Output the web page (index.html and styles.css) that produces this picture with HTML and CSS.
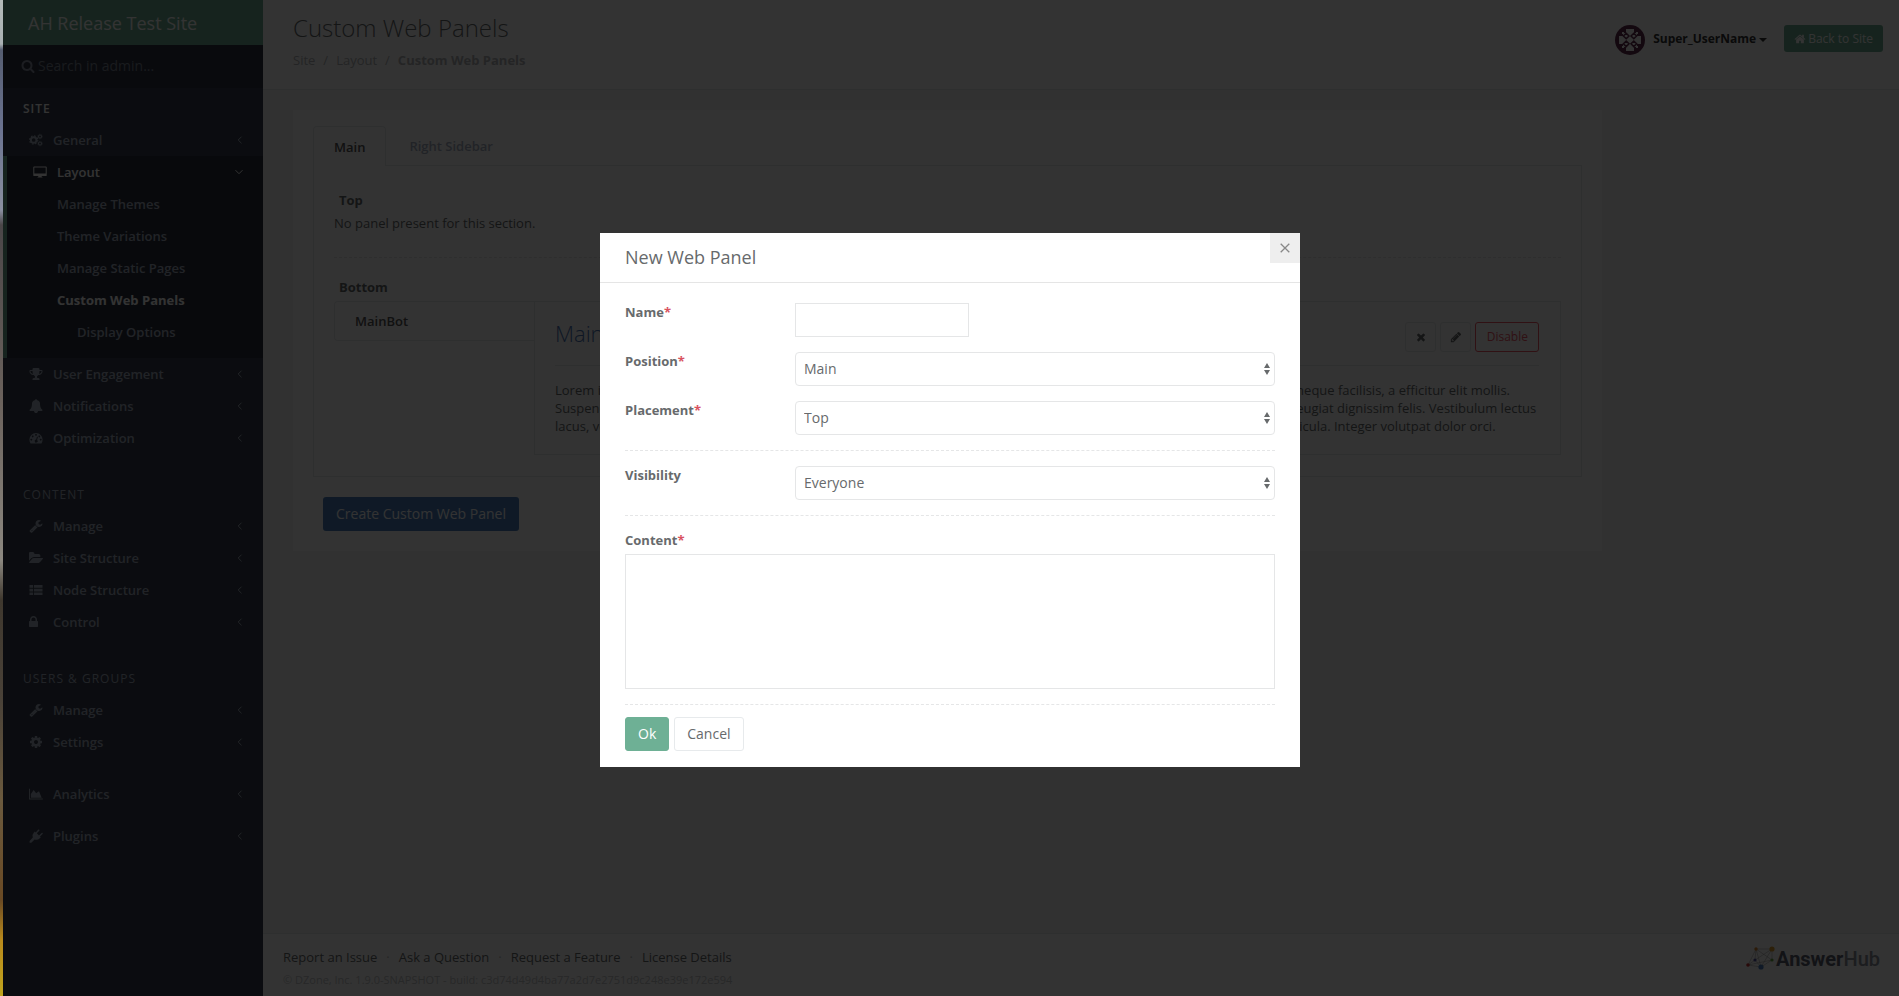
FILE: index.html
```html
<!DOCTYPE html>
<html lang="en">
<head>
<meta charset="utf-8">
<title>Custom Web Panels</title>
<link rel="stylesheet" href="styles.css">
</head>
<body>
<svg class="sprite" aria-hidden="true">
  <symbol id="i-search" viewBox="0 0 1792 1792"><path d="M1216 832q0-185-131.500-316.500t-316.500-131.500-316.500 131.500-131.500 316.500 131.500 316.500 316.500 131.500 316.500-131.500 131.500-316.500zm512 832q0 52-38 90t-90 38q-54 0-90-38l-343-342q-179 124-399 124-143 0-273.500-55.500t-225-150-150-225-55.500-273.500 55.500-273.500 150-225 225-150 273.500-55.500 273.500 55.500 225 150 150 225 55.500 273.500q0 220-124 399l343 343q37 37 37 90z"/></symbol>
  <symbol id="i-home" viewBox="0 0 1792 1792"><path d="M1472 992v480q0 26-19 45t-45 19h-384v-384h-256v384h-384q-26 0-45-19t-19-45v-480q0-1 .5-3t.5-3l575-474 575 474q1 2 1 6zm223-69l-62 74q-8 9-21 11h-3q-13 0-21-7l-692-577-692 577q-12 8-24 7-13-2-21-11l-62-74q-8-10-7-23.500t11-21.500l719-599q32-26 76-26t76 26l244 204v-195q0-14 9-23t23-9h192q14 0 23 9t9 23v408l219 182q10 8 11 21.500t-7 23.500z"/></symbol>
  <symbol id="i-cog" viewBox="0 0 1792 1792"><path d="M1152 896q0-106-75-181t-181-75-181 75-75 181 75 181 181 75 181-75 75-181zm512-109v222q0 12-8 23t-20 13l-185 28q-19 54-39 91 35 50 107 138 10 12 10 25t-9 23q-27 37-99 108t-94 71q-12 0-26-9l-138-108q-44 23-91 38-16 136-29 186-7 28-36 28h-222q-14 0-24.500-8.500t-11.500-21.500l-28-184q-49-16-90-37l-141 107q-10 9-25 9-14 0-25-11-126-114-165-168-7-10-7-23 0-12 8-23 15-21 51-66.500t54-70.500q-27-50-41-99l-183-27q-13-2-21-12.500t-8-23.500v-222q0-12 8-23t19-13l186-28q14-46 39-92-40-57-107-138-10-12-10-24 0-10 9-23 26-36 98.500-107.500t94.500-71.500q13 0 26 10l138 107q44-23 91-38 16-136 29-186 7-28 36-28h222q14 0 24.500 8.500t11.500 21.500l28 184q49 16 90 37l142-107q9-9 24-9 13 0 25 10 129 119 165 170 7 8 7 22 0 12-8 23-15 21-51 66.500t-54 70.500q26 50 41 98l183 28q13 2 21 12.500t8 23.500z"/></symbol>
  <symbol id="i-cogs" viewBox="0 0 15 14"><g fill="none" stroke="currentColor"><circle cx="5" cy="7" r="3" stroke-width="2"/><circle cx="5" cy="7" r="4.400" stroke-width="1.200" stroke-dasharray="1.750 1.700"/><circle cx="11.800" cy="3.200" r="1.600" stroke-width="1.200"/><circle cx="11.800" cy="3.200" r="2.400" stroke-width=".8" stroke-dasharray="1 .9"/><circle cx="11.800" cy="10.800" r="1.600" stroke-width="1.200"/><circle cx="11.800" cy="10.800" r="2.400" stroke-width=".8" stroke-dasharray="1 .9"/></g></symbol>
  <symbol id="i-desktop" viewBox="0 0 15 14"><path fill-rule="evenodd" d="M1.200 1h12.600q.9 0 .9.900v8.600q0 .9-.9.900H9.300v.8q1 .2 1 .8H4.700q0-.6 1-.8v-.8H1.200q-.9 0-.9-.9V1.900q0-.9.900-.9zm.2 1.100v6.500h12.200V2.100z"/></symbol>
  <symbol id="i-trophy" viewBox="0 0 1792 1792"><path d="M522 883q-74-162-74-371h-256v96q0 78 94.500 162t235.500 113zm1078-275v-96h-256q0 209-74 371 141-29 235.500-113t94.500-162zm128-128v128q0 71-41.500 143t-112 130-173 97.500-215.500 44.500q-42 54-95 95-38 34-52.500 72.500t-14.500 89.500q0 54 30.500 91t97.500 37q75 0 133.500 45.500t58.500 114.500v64q0 14-9 23t-23 9h-832q-14 0-23-9t-9-23v-64q0-69 58.500-114.500t133.500-45.500q67 0 97.500-37t30.500-91q0-51-14.500-89.500t-52.500-72.500q-53-41-95-95-113-5-215.500-44.500t-173-97.500-112-130-41.500-143v-128q0-40 28-68t68-28h288v-96q0-66 47-113t113-47h576q66 0 113 47t47 113v96h288q40 0 68 28t28 68z"/></symbol>
  <symbol id="i-bell" viewBox="0 0 1792 1792"><path d="M1728 1408q0 52-38 90t-90 38h-448q0 106-75 181t-181 75-181-75-75-181h-448q-52 0-90-38t-38-90q50-42 91-88t85-119.500 74.500-158.500 50-206 19.500-260q0-152 117-282.500t307-158.500q-8-19-8-39 0-40 28-68t68-28 68 28 28 68q0 20-8 39 190 28 307 158.500t117 282.500q0 139 19.500 260t50 206 74.500 158.500 85 119.500 91 88z"/></symbol>
  <symbol id="i-gauge" viewBox="0 0 14 14"><path fill-rule="evenodd" d="M7 2a6.600 6.600 0 0 1 6.600 6.600q0 2-1 3.600-.2.300-.6.300H2q-.4 0-.6-.3-1-1.600-1-3.600A6.600 6.600 0 0 1 7 2zM2.300 7.700a.9.900 0 1 0 .01 0zM3.700 4.400a.9.900 0 1 0 .01 0zM7 3a.9.900 0 1 0 .01 0zM10.300 4.400a.9.900 0 1 0 .01 0zM11.700 7.700a.9.900 0 1 0 .01 0zM8 5.600l-.8 3a1.500 1.500 0 1 0 .9.300l.8-3z"/></symbol>
  <symbol id="i-wrench" viewBox="0 0 1792 1792"><path d="M448 1472q0-26-19-45t-45-19-45 19-19 45 19 45 45 19 45-19 19-45zm644-420l-682 682q-37 37-90 37-52 0-91-37l-106-108q-38-36-38-90 0-53 38-91l681-681q39 98 114.500 173.500t173.500 114.500zm634-435q0 39-23 106-47 134-164.500 217.500t-258.500 83.500q-185 0-316.500-131.500t-131.500-316.500 131.500-316.500 316.500-131.500q58 0 121.500 16.500t107.500 46.500q16 11 16 28t-16 28l-293 169v224l193 107q5-3 79-48.500t135.500-81 70.500-35.500q15 0 23.500 10t8.500 25z"/></symbol>
  <symbol id="i-folder" viewBox="0 0 1820 1792"><path d="M1815 952q0 31-31 66l-336 396q-43 51-120.500 86.500t-143.500 35.500h-1088q-34 0-60.500-13t-26.500-43q0-31 31-66l336-396q43-51 120.500-86.500t143.500-35.500h1088q34 0 60.500 13t26.500 43zm-343-344v160h-832q-94 0-197 47.500t-164 119.500l-337 396-5 6q0-4-.5-12.500t-.5-12.500v-960q0-92 66-158t158-66h320q92 0 158 66t66 158v32h544q92 0 158 66t66 158z"/></symbol>
  <symbol id="i-list" viewBox="0 0 14 14"><path d="M.5 2h3.600v2.700H.5zM5 2h8.500v2.700H5zM.5 5.700h3.600v2.700H.5zM5 5.700h8.500v2.700H5zM.5 9.400h3.600v2.700H.5zM5 9.400h8.500v2.700H5z"/></symbol>
  <symbol id="i-lock" viewBox="320 0 1792 1792"><path d="M640 768h512v-192q0-106-75-181t-181-75-181 75-75 181v192zm832 96v576q0 40-28 68t-68 28h-960q-40 0-68-28t-28-68v-576q0-40 28-68t68-28h32v-192q0-184 132-316t316-132 316 132 132 316v192h32q40 0 68 28t28 68z"/></symbol>
  <symbol id="i-chart" viewBox="0 0 15 14"><path d="M0 1.500h1v10.300h13.800v1H0zM2 11V7l3-4.300 2.700 3.500 3-2.200L13.600 11z"/></symbol>
  <symbol id="i-plug" viewBox="0 0 14 14"><path d="M9.300.6q.6-.3 1 .1t0 1L7.800 4.300l2.200 2.200 2.600-2.600q.6-.4 1 0t0 1L11 7.500l.8.800-1 1q-2.400 2.300-5.200 1.100L2.300 13.700H.6V12l3.200-3.400q-1.100-2.700 1.100-5l1-1 .8.800z"/></symbol>
  <symbol id="i-times" viewBox="0 0 1792 1792"><path d="M1490 1322q0 40-28 68l-136 136q-28 28-68 28t-68-28l-294-294-294 294q-28 28-68 28t-68-28l-136-136q-28-28-28-68t28-68l294-294-294-294q-28-28-28-68t28-68l136-136q28-28 68-28t68 28l294 294 294-294q28-28 68-28t68 28l136 136q28 28 28 68t-28 68l-294 294 294 294q28 28 28 68z"/></symbol>
  <symbol id="i-pencil" viewBox="0 0 1792 1792"><path d="M491 1536l91-91-235-235-91 91v107h128v128h107zm523-928q0-22-22-22-10 0-17 7l-542 542q-7 7-7 17 0 22 22 22 10 0 17-7l542-542q7-7 7-17zm-54-192l416 416-832 832h-416v-416zm683 96q0 53-37 90l-166 166-416-416 166-165q36-38 90-38 53 0 91 38l235 234q37 39 37 91z"/></symbol>
  <symbol id="i-left" viewBox="0 0 8 8"><path d="M5.500.7L2.200 4l3.300 3.300" fill="none" stroke="currentColor"/></symbol>
  <symbol id="i-down" viewBox="0 0 8 8"><path d="M.5 2.200L4 5.700l3.500-3.500" fill="none" stroke="currentColor"/></symbol>
  <symbol id="i-updown" viewBox="0 0 6 12"><path d="M3 0l3 5H0zM3 12L0 7h6z"/></symbol>
</svg>

<div class="app">
  <aside class="sidebar">
    <a class="brand" href="#">AH Release Test Site</a>
    <div class="search">
      <svg class="icon"><use href="#i-search"/></svg>
      <input type="text" placeholder="Search in admin..." aria-label="Search in admin">
    </div>
    <nav class="menu">
      <h2 class="menu-title menu-title-on">SITE</h2>
      <a class="item" href="#"><svg class="icon"><use href="#i-cogs"/></svg><span>General</span><svg class="arrow"><use href="#i-left"/></svg></a>
      <div class="open">
        <a class="item item-on" href="#"><svg class="icon"><use href="#i-desktop"/></svg><span>Layout</span><svg class="arrow"><use href="#i-down"/></svg></a>
        <a class="sub" href="#">Manage Themes</a>
        <a class="sub" href="#">Theme Variations</a>
        <a class="sub" href="#">Manage Static Pages</a>
        <a class="sub sub-on" href="#">Custom Web Panels</a>
        <a class="sub sub-deep" href="#">Display Options</a>
      </div>
      <a class="item" href="#"><svg class="icon"><use href="#i-trophy"/></svg><span>User Engagement</span><svg class="arrow"><use href="#i-left"/></svg></a>
      <a class="item" href="#"><svg class="icon"><use href="#i-bell"/></svg><span>Notifications</span><svg class="arrow"><use href="#i-left"/></svg></a>
      <a class="item" href="#"><svg class="icon"><use href="#i-gauge"/></svg><span>Optimization</span><svg class="arrow"><use href="#i-left"/></svg></a>
      <h2 class="menu-title">CONTENT</h2>
      <a class="item" href="#"><svg class="icon"><use href="#i-wrench"/></svg><span>Manage</span><svg class="arrow"><use href="#i-left"/></svg></a>
      <a class="item" href="#"><svg class="icon"><use href="#i-folder"/></svg><span>Site Structure</span><svg class="arrow"><use href="#i-left"/></svg></a>
      <a class="item" href="#"><svg class="icon"><use href="#i-list"/></svg><span>Node Structure</span><svg class="arrow"><use href="#i-left"/></svg></a>
      <a class="item" href="#"><svg class="icon"><use href="#i-lock"/></svg><span>Control</span><svg class="arrow"><use href="#i-left"/></svg></a>
      <h2 class="menu-title">USERS &amp; GROUPS</h2>
      <a class="item" href="#"><svg class="icon"><use href="#i-wrench"/></svg><span>Manage</span><svg class="arrow"><use href="#i-left"/></svg></a>
      <a class="item" href="#"><svg class="icon"><use href="#i-cog"/></svg><span>Settings</span><svg class="arrow"><use href="#i-left"/></svg></a>
      <a class="item item-first" href="#"><svg class="icon"><use href="#i-chart"/></svg><span>Analytics</span><svg class="arrow"><use href="#i-left"/></svg></a>
      <a class="item item-apart" href="#"><svg class="icon"><use href="#i-plug"/></svg><span>Plugins</span><svg class="arrow"><use href="#i-left"/></svg></a>
    </nav>
  </aside>

  <div class="page">
    <header class="top">
      <div class="heading">
        <h1>Custom Web Panels</h1>
        <nav class="crumbs"><a href="#">Site</a><span>/</span><a href="#">Layout</a><span>/</span><strong>Custom Web Panels</strong></nav>
      </div>
      <div class="account">
        <a class="user" href="#">
          <svg class="avatar" viewBox="0 0 30 30"><circle cx="15" cy="15" r="15" fill="#622a4e"/>
            <path fill="#fff" d="M11 4h8v4h3v3h4v8h-4v3h-3v4h-8v-4H8v-3H4v-8h4V8h3z"/>
            <path fill="#fff" d="M7 7h2v2H7zM21 7h2v2h-2zM7 21h2v2H7zM21 21h2v2h-2z"/>
            <path fill="#fff" stroke="#622a4e" stroke-width="1.500" d="M11.200 8.200l2.800 2.800-2.800 2.800-2.800-2.800zM18.800 8.200l2.800 2.800-2.800 2.800-2.800-2.800zM11.200 16l2.800 2.800-2.800 2.800-2.800-2.800zM18.800 16l2.800 2.800-2.800 2.800-2.800-2.800z"/>
          </svg>
          <span>Super_UserName</span><i class="caret"></i>
        </a>
        <a class="back" href="#"><svg class="icon-sm"><use href="#i-home"/></svg>Back to Site</a>
      </div>
    </header>

    <main class="content">
      <section class="panel">
        <div class="tabs">
          <button class="tab tab-on" type="button">Main</button>
          <button class="tab" type="button">Right Sidebar</button>
        </div>
        <div class="tab-body">
          <h3>Top</h3>
          <p>No panel present for this section.</p>
          <hr class="dash">
          <h3>Bottom</h3>
          <div class="side-tabs">
            <button class="side-tab" type="button">MainBot</button>
            <article class="side-body">
              <div class="side-head">
                <h2>MainBot</h2>
                <div class="tools">
                  <button type="button" aria-label="Delete"><svg class="icon-sm"><use href="#i-times"/></svg></button>
                  <button type="button" aria-label="Edit"><svg class="icon-sm"><use href="#i-pencil"/></svg></button>
                  <button class="disable" type="button">Disable</button>
                </div>
              </div>
              <p>Lorem ipsum dolor sit amet, consectetur adipiscing elit. Integer in lectus a odio viverra porttitor. Nam a posuere eros vitae neque facilisis, a efficitur elit mollis. Suspendisse potenti. Donec vitae nisl at justo sollicitudin tempor porta. Aenean in enim id sapien rhoncus mattis. Nulla et feugiat dignissim felis. Vestibulum lectus lacus, vehicula sit amet mi nec, placerat elementum mattis tempus magna. Praesent at nulla ut nibh aliquet luctus a vel vehicula. Integer volutpat dolor orci.</p>
            </article>
          </div>
        </div>
        <button class="create" type="button">Create Custom Web Panel</button>
      </section>
    </main>

    <footer class="foot">
      <div>
        <nav class="links"><a href="#">Report an Issue</a><span>·</span><a href="#">Ask a Question</a><span>·</span><a href="#">Request a Feature</a><span>·</span><a href="#">License Details</a></nav>
        <p class="build">© DZone, Inc. 1.9.0-SNAPSHOT - build: c3d74d49d4ba77a2d7e2751d9c248e39e172e594</p>
      </div>
      <a class="logo" href="#">
        <svg viewBox="0 0 29 25"><path fill="none" stroke="#999" stroke-width=".5" d="M2 19L10 3 26 3 26 14 15 21 2 19 9 14 26 3M10 3L26 14M9 14L15 21 26 3M10 3L9 14M2 19L26 14M10 3L15 21"/><circle cx="10" cy="3" r="1.700" fill="#d9822b"/><circle cx="26" cy="3" r="2.600" fill="#e0a030"/><circle cx="26" cy="14" r="1.600" fill="#5fa83c"/><circle cx="9" cy="14" r="1.600" fill="#5050a0"/><circle cx="2" cy="19" r="1.800" fill="#c33"/><circle cx="15" cy="21" r="2.600" fill="#4a7fc0"/></svg>
        <span><b>Answer</b>Hub</span>
      </a>
    </footer>
  </div>

  <div class="overlay">
    <form class="modal" role="dialog" aria-labelledby="modal-title">
      <div class="modal-head">
        <h2 id="modal-title">New Web Panel</h2>
        <button class="close" type="button" aria-label="Close"><svg viewBox="0 0 10 10"><path d="M.7.7l8.600 8.600M9.300.7L.7 9.300" fill="none" stroke="currentColor" stroke-width="1.300"/></svg></button>
      </div>
      <div class="modal-body">
        <div class="row"><label for="name">Name<em>*</em></label><input id="name" class="field field-name" type="text"></div>
        <div class="row"><label for="position">Position<em>*</em></label><div class="pick"><select id="position" class="field"><option>Main</option></select><svg><use href="#i-updown"/></svg></div></div>
        <div class="row"><label for="placement">Placement<em>*</em></label><div class="pick"><select id="placement" class="field"><option>Top</option></select><svg><use href="#i-updown"/></svg></div></div>
        <hr class="dash">
        <div class="row"><label for="visibility">Visibility</label><div class="pick"><select id="visibility" class="field"><option>Everyone</option></select><svg><use href="#i-updown"/></svg></div></div>
        <hr class="dash">
        <div class="stack"><label for="content">Content<em>*</em></label><textarea id="content"></textarea></div>
        <hr class="dash">
        <div class="actions"><button class="ok" type="submit">Ok</button><button class="cancel" type="button">Cancel</button></div>
      </div>
    </form>
  </div>
</div>
</body>
</html>
```

FILE: styles.css
```css
* { box-sizing: border-box; }

body {
  margin: 0;
  padding-left: 3px;
  font: 13px/18px "Open Sans", "Noto Sans", sans-serif;
  color: #676a6c;
  background: linear-gradient(#b4bab9 0, #a9b0b2 44px, #555d70 50px, #6b7390 130px, #8a8fa0 210px, #4a4648 225px, #6b625c 400px, #8c8880 560px, #3f382e 600px, #4a4238 700px, #6b5a3e 800px, #6a4a24 900px, #b98a1c 940px, #c0a41e 100%);
}
h1, h2, h3, p { margin: 0; }
a { color: inherit; text-decoration: none; }
button, input, select, textarea { font: inherit; color: inherit; margin: 0; }
svg { fill: currentColor; flex: none; }
.sprite { display: none; }
.icon { width: 14px; height: 14px; }
.icon-sm { width: 12px; height: 12px; }

.app {
  position: relative;
  display: flex;
  min-height: 100vh;
  background: #f5f5f6;
}

/* Sidebar */
.sidebar { flex: none; width: 260px; background: #373f4f; color: #a7b1c2; }
.brand {
  display: flex;
  align-items: center;
  height: 45px;
  padding: 0 25px;
  background: #6eb095;
  color: #fff;
  font-size: 18px;
}
.search { display: flex; align-items: center; gap: 3px; height: 43px; padding: 0 18px 2px; background: #2d3443; color: #8a93a3; }
.search input { width: 180px; padding: 0; border: 0; background: none; font-size: 14px; }
.search input::placeholder { color: #7d8593; opacity: 1; }
.menu { display: flex; flex-direction: column; padding-top: 4px; }
.menu-title { display: flex; align-items: center; height: 32px; padding: 2px 0 0 20px; font-size: 12px; font-weight: 400; letter-spacing: 1px; }
.menu-title:not(:first-child) { margin-top: 24px; }
.menu-title-on { color: #fff; font-weight: 600; }
.item { display: flex; align-items: center; height: 32px; padding: 0 19px 0 26px; font-weight: 600; }
.item span { flex: 1; padding-left: 10px; }
.arrow { width: 8px; height: 8px; }
.open { display: flex; flex-direction: column; padding-bottom: 10px; border-left: 4px solid #6eb095; background: #2a303e; }
.item-on { padding-right: 20px; color: #fff; }
.sub { display: flex; align-items: center; height: 32px; padding-left: 50px; font-weight: 600; }
.sub-on { color: #fff; font-weight: 700; }
.sub-deep { padding-left: 70px; }
.item-first { margin-top: 20px; }
.item-apart { margin-top: 10px; }

/* Page */
.page { flex: 1; min-width: 0; display: flex; flex-direction: column; }
.top {
  display: flex;
  justify-content: space-between;
  min-height: 90px;
  padding: 12px 16px 0 30px;
  background: #fff;
  border-bottom: 1px solid #e7eaec;
}
h1 { font-size: 24px; line-height: 32px; font-weight: 300; }
.crumbs { display: flex; gap: 8px; padding-top: 7px; color: #b4b6b8; }
.account { display: flex; align-items: flex-start; gap: 17px; padding-top: 13px; }
.user { display: flex; align-items: center; gap: 8px; color: #333; font-size: 12px; font-weight: 700; }
.avatar { width: 30px; height: 30px; }
.user span { padding-bottom: 2px; }
.caret { margin-left: -5px; border: 4px solid transparent; border-top-color: #333; border-bottom: 0; }
.back { display: flex; align-items: center; gap: 2px; height: 27px; padding: 0 10px; border-radius: 3px; background: #6eb095; color: #fff; font-size: 12px; }

.content { flex: 1; padding: 20px 30px; }
.panel { width: calc(83.333% - 4px); padding: 16px 20px 20px; background: #fff; }
.tabs { display: flex; }
.tab { height: 40px; padding: 0 23px; border: 0; background: none; color: #a7b1c2; font-weight: 600; }
.tab-on { padding: 0 20px; border: 1px solid #e7eaec; border-bottom: 0; border-radius: 4px 4px 0 0; background: #fff; color: #555; position: relative; }
.tab-body { padding: 25px 20px 21px; border: 1px solid #e7eaec; margin-top: -1px; }
h3 { padding-left: 5px; font-size: 13px; line-height: 18px; }
.tab-body > p { padding-top: 5px; }
.dash { margin: 0; border: 0; border-top: 1px dashed #e5e6e7; }
.tab-body .dash { margin: 25px 0 20px; }
.side-tabs { display: flex; align-items: flex-start; margin-top: 5px; }
.side-tab { flex: none; width: 200px; height: 40px; padding: 0 20px; border: 1px solid #e7eaec; border-right: 0; border-radius: 4px 0 0 4px; background: #fff; color: #555; font-weight: 600; text-align: left; }
.side-body { flex: 1; min-width: 0; padding: 20px 21px 19px 20px; border: 1px solid #e7eaec; }
.side-head { display: flex; justify-content: space-between; padding-bottom: 13px; border-bottom: 1px solid #e7eaec; margin-bottom: 15px; }
.side-head h2 { color: #4a74b4; font-size: 22px; line-height: 22px; font-weight: 300; }
.tools { display: flex; gap: 4px; }
.tools button { display: flex; align-items: center; justify-content: center; width: 31px; height: 30px; padding: 0; border: 1px solid #e7eaec; border-radius: 3px; background: #fff; font-size: 12px; }
.tools .disable { width: 64px; border-color: #ed5565; color: #ed5565; }
.create { display: block; height: 34px; margin: 20px 0 0 10px; padding: 0 13px; border: 0; border-radius: 3px; background: #4a7fbf; color: #fff; font-size: 14px; }

.foot { display: flex; justify-content: space-between; align-items: flex-start; min-height: 63px; padding: 14px 19px 7px 20px; border-top: 1px solid #e7eaec; background: #fff; }
.links { display: flex; gap: 9px; }
.links span { color: #bbb; }
.build { padding-top: 5px; color: #c4c6c8; font-size: 11px; }
.logo { display: flex; align-items: center; gap: 1px; margin-top: -2px; color: #8b8f9a; font: 500 20px/22px Roboto, sans-serif; }
.logo svg { width: 29px; height: 25px; }
.logo b { color: #5c6270; font-weight: 700; }

/* Dialog */
.overlay {
  position: absolute;
  inset: 0;
  display: flex;
  align-items: flex-start;
  justify-content: center;
  padding: 233px 2px 0 0;
  background: rgba(0, 0, 0, .8);
}
.modal { width: 700px; background: #fff; }
.modal-head { display: flex; justify-content: space-between; align-items: flex-start; height: 50px; padding-left: 25px; border-bottom: 1px solid #e5e5e5; }
.modal-head h2 { font-size: 18px; line-height: 48px; font-weight: 400; }
.close { display: flex; align-items: center; justify-content: center; width: 30px; height: 30px; padding: 0; border: 0; background: #eee; color: #888; }
.close svg { width: 10px; height: 10px; }
.modal-body { display: flex; flex-direction: column; gap: 15px; padding: 20px 25px 16px; }
.row { display: grid; grid-template-columns: 170px 1fr; align-items: start; }
label { font-weight: 700; }
em { color: #d9535f; font-style: normal; }
.field { height: 34px; padding: 0 8px; border: 1px solid #e5e6e7; background: #fff; font-size: 14px; }
.field-name { width: 174px; }
.pick { display: grid; align-items: center; }
.pick select { grid-area: 1 / 1; appearance: none; width: 100%; border-radius: 4px; }
.pick svg { grid-area: 1 / 1; justify-self: end; width: 6px; height: 12px; margin-right: 5px; pointer-events: none; }
.stack { display: flex; flex-direction: column; gap: 5px; }
textarea { height: 135px; padding: 6px 8px; border: 1px solid #e5e6e7; resize: none; }
.actions { display: flex; gap: 5px; margin-top: -3px; }
.actions button { height: 34px; padding: 0 12px; border: 1px solid #e7eaec; border-radius: 3px; background: #fff; font-size: 14px; }
.actions .ok { border-color: #6eb095; background: #6eb095; color: #fff; }
```
